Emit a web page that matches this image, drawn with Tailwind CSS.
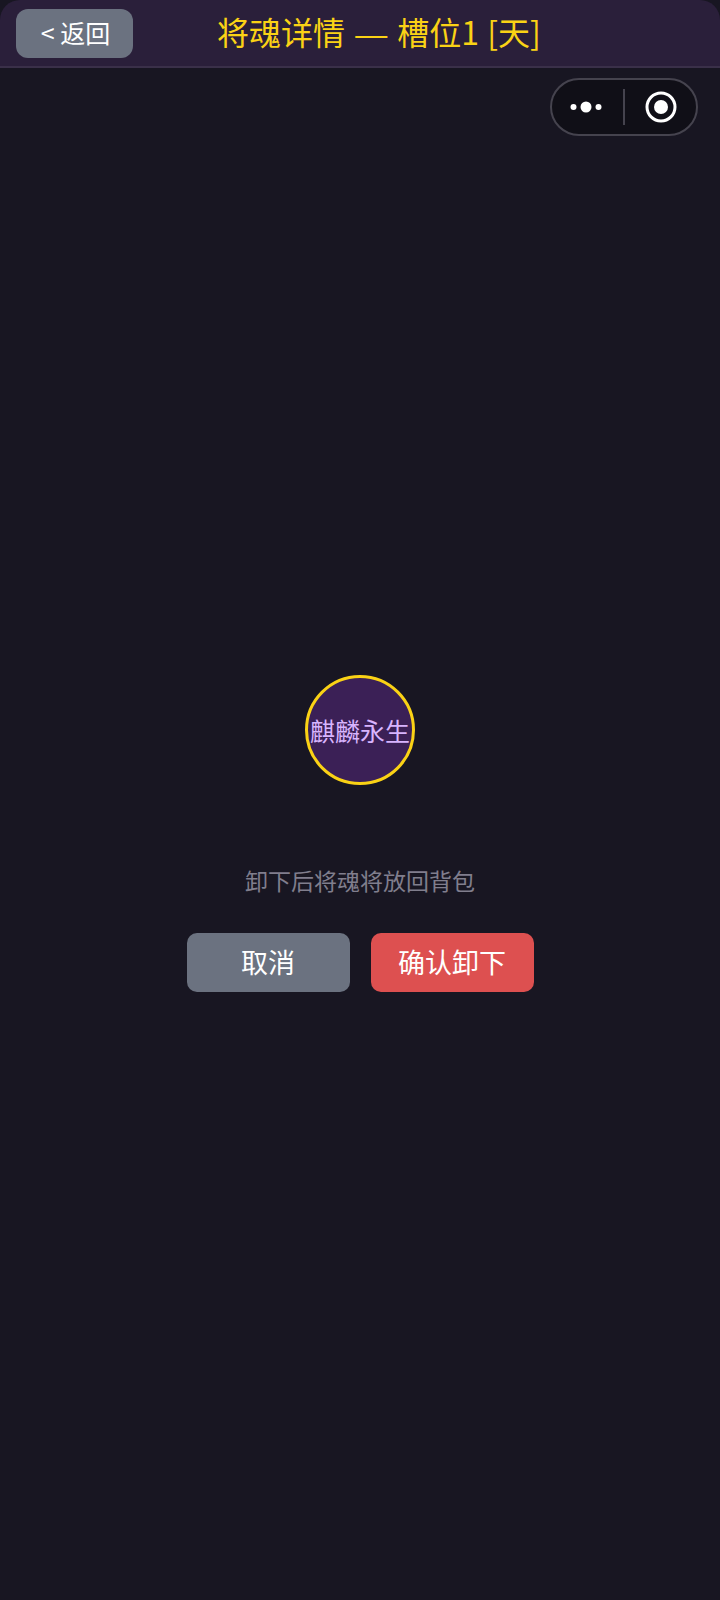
<!DOCTYPE html>
<html lang="zh">
<head>
  <meta charset="UTF-8" />
  <meta name="viewport" content="width=device-width, initial-scale=1.0"/>
  <title>将魂详情</title>
  <script src="https://cdn.jsdelivr.net/npm/@tailwindcss/browser@4"></script>
</head>
<body class="bg-[#181622] font-['Noto_Sans_CJK_SC',sans-serif]">
  <div class="relative h-[1600px] w-[720px] overflow-hidden bg-[#181622]">
    <header class="flex h-[68px] items-center rounded-t-[20px] border-b-2 border-[#3a3049] bg-[#2a1f3a] pl-4">
      <button class="h-[49px] w-[117px] rounded-[12px] bg-[#6b7280] pb-[2px] pl-[2px] text-[25px] leading-none text-white">&lt; 返回</button>
      <h1 class="ml-[84px] pb-[2px] text-[32px] leading-none whitespace-nowrap text-[#fad215]">将魂详情 <span class="mx-[3px] font-['Liberation_Sans']">—</span> 槽位1 <span class="ml-[1px]">[天]</span></h1>
    </header>

    <div class="absolute left-[550px] top-[78px] flex h-[58px] w-[148px] items-center rounded-full border-2 border-[#45434e] bg-[#100f17]">
      <div class="flex w-[71px] justify-center pr-[3px]">
        <svg width="32" height="12" viewBox="0 0 32 12" fill="#fff"><circle cx="3.5" cy="6" r="3"/><circle cx="16" cy="6" r="5.5"/><circle cx="28.5" cy="6" r="3"/></svg>
      </div>
      <div class="h-9 w-0.5 bg-[#45434e]"></div>
      <div class="flex flex-1 justify-center">
        <svg width="32" height="32" viewBox="0 0 32 32"><circle cx="16" cy="16" r="14" fill="none" stroke="#fff" stroke-width="3"/><circle cx="16" cy="16" r="7" fill="#fff"/></svg>
      </div>
    </div>

    <main class="flex flex-col items-center pt-[607px]">
      <div class="flex h-[110px] w-[110px] items-center justify-center rounded-full border-[3px] border-[#fad215] bg-[#3b2056] text-center text-[25px] leading-none whitespace-nowrap text-[#d8b4fe]">麒麟永生</div>
      <p class="mt-[79px] text-[23px] leading-8 text-[#807e8d]">卸下后将魂将放回背包</p>
      <div class="mt-[37px] flex gap-[21px]">
        <button class="h-[59px] w-[163px] rounded-[10px] bg-[#6b7280] pb-[2px] text-[27px] leading-none text-white">取消</button>
        <button class="h-[59px] w-[163px] rounded-[10px] bg-[#dd5050] pb-[2px] text-[27px] leading-none text-white">确认卸下</button>
      </div>
    </main>
  </div>
</body>
</html>
